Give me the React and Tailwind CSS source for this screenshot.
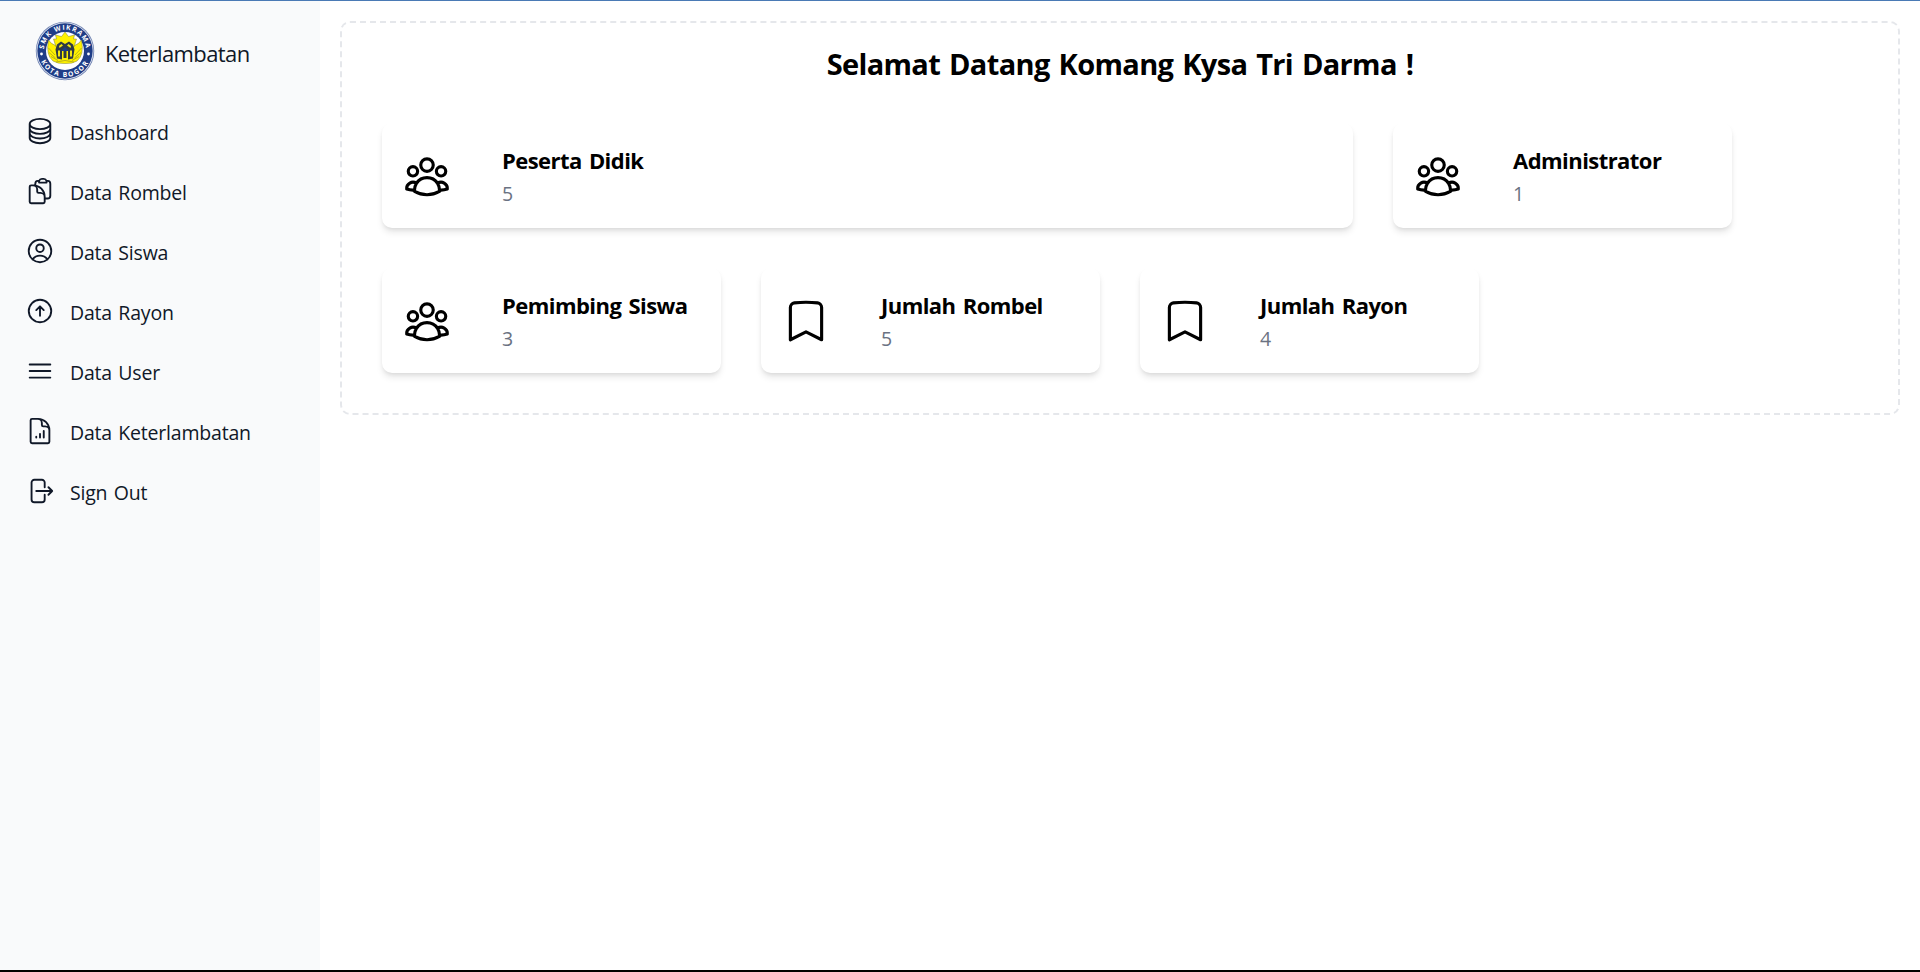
import {
  HiOutlineCircleStack,
  HiOutlineClipboardDocument,
  HiOutlineUserCircle,
  HiOutlineArrowUpCircle,
  HiOutlineBars3,
  HiOutlineDocumentChartBar,
  HiOutlineArrowRightOnRectangle,
  HiOutlineUserGroup,
  HiOutlineBookmark,
} from "react-icons/hi2";

const menu = [
  { label: "Dashboard", Icon: HiOutlineCircleStack },
  { label: "Data Rombel", Icon: HiOutlineClipboardDocument },
  { label: "Data Siswa", Icon: HiOutlineUserCircle },
  { label: "Data Rayon", Icon: HiOutlineArrowUpCircle },
  { label: "Data User", Icon: HiOutlineBars3 },
  { label: "Data Keterlambatan", Icon: HiOutlineDocumentChartBar },
  { label: "Sign Out", Icon: HiOutlineArrowRightOnRectangle },
];

const stats = [
  { title: "Peserta Didik", value: 5, Icon: HiOutlineUserGroup, size: "w-[971px]" },
  { title: "Administrator", value: 1, Icon: HiOutlineUserGroup, size: "w-[339px]" },
  { title: "Pemimbing Siswa", value: 3, Icon: HiOutlineUserGroup, size: "w-[339px]" },
  { title: "Jumlah Rombel", value: 5, Icon: HiOutlineBookmark, size: "w-[339px]" },
  { title: "Jumlah Rayon", value: 4, Icon: HiOutlineBookmark, size: "w-[339px]" },
];

function Logo() {
  return (
    <svg viewBox="0 0 120 120" className="h-[60px] w-[60px] shrink-0">
      <defs>
        <path id="ring-top" d="M 17.6 63 A 42.5 42.5 0 1 1 102.4 63" />
        <path id="ring-bottom" d="M 8 60 A 52 52 0 0 0 112 60" />
      </defs>
      <circle cx="60" cy="60" r="58.5" fill="#7486b5" />
      <circle cx="60" cy="60" r="56.8" fill="#e8ecf4" />
      <circle cx="60" cy="60" r="55.3" fill="#1f3d87" />
      <circle cx="60" cy="60" r="38" fill="#ffffff" />
      <g fill="#ffffff" fontFamily="'Open Sans', sans-serif" fontWeight="700" fontSize="13.5">
        <text textAnchor="middle" letterSpacing="2.4">
          <textPath href="#ring-top" startOffset="50%">SMK WIKRAMA</textPath>
        </text>
        <text textAnchor="middle" letterSpacing="3">
          <textPath href="#ring-bottom" startOffset="50%">KOTA BOGOR</textPath>
        </text>
      </g>
      <circle cx="13" cy="66" r="2.8" fill="#fff" />
      <circle cx="107" cy="66" r="2.8" fill="#fff" />
      <path
        d="M27 38 Q32 46 41 49 L45 53 L75 53 L79 49 Q88 46 93 38 Q99 68 84 80 Q74 86 60 85 Q46 86 36 80 Q21 68 27 38 Z"
        fill="#fff200"
        stroke="#777d3c"
        strokeWidth="1"
      />
      <path
        d="M60 22 L67 31 L79 28 L77 36 L83 36 L78 52 L42 52 L37 36 L43 36 L41 28 L53 31 Z"
        fill="#fff200"
        stroke="#777d3c"
        strokeWidth="1"
      />
      <path d="M27 54 L40 68 M28 63 L41 74 M32 71 L46 79 M93 54 L80 68 M92 63 L79 74 M88 71 L74 79 M42 82 Q60 76 78 82" stroke="#a39c22" strokeWidth="1.5" fill="none" />
      <path d="M44 47 L52 41 L60 46 L68 41 L76 47 L79 57 L76 75 L66 77 L66 60 L63 60 L63 74 L57 74 L57 60 L54 60 L54 77 L44 75 L41 57 Z" fill="#303b45" />
      <path d="M46 59 H50 V71 H46 Z M70 59 H74 V71 H70 Z M48 50 L53 46 L56 49 L49 54 Z M72 50 L67 46 L64 49 L71 54 Z" fill="#f3e812" />
      <path d="M52 60 L60 52 L68 60 Z" fill="#1f3d87" />
    </svg>
  );
}

function StatCard({ title, value, Icon, size }) {
  return (
    <div
      className={`${size} flex h-[105px] items-center gap-[50px] rounded-[10px] bg-white px-5 shadow-[0_5px_7.5px_-1.25px_rgba(0,0,0,0.1),0_2.5px_5px_-2.5px_rgba(0,0,0,0.1)]`}
    >
      <Icon className="h-[50px] w-[50px] shrink-0 text-black" />
      <div>
        <h5 className="text-[22px] leading-[35px] font-bold tracking-[-0.55px] [word-spacing:2px] text-black">{title}</h5>
        <p className="pt-px text-[19.5px] leading-[29px] tracking-[-0.5px] text-gray-500">{value}</p>
      </div>
    </div>
  );
}

export default function App() {
  return (
    <div className="flex h-[972px] flex-col border-t border-b-2 border-t-[#4a7ab5] border-b-black bg-white font-['Open_Sans','Noto_Sans',sans-serif]">
      <div className="flex min-h-0 flex-1">
        <aside className="w-80 shrink-0 bg-gray-50 px-[15px] pt-5">
          <div className="flex items-center gap-[10px] pl-5">
            <Logo />
            <span className="pt-1 text-[22px] leading-[35px] tracking-[-0.6px] text-gray-900">Keterlambatan</span>
          </div>
          <ul className="mt-[25px] flex flex-col gap-[10px]">
            {menu.map(({ label, Icon }) => (
              <li key={label} className="flex h-[50px] items-center gap-[15px] px-[10px] text-gray-900">
                <Icon className="h-[30px] w-[30px] shrink-0" />
                <span className="pt-[3px] text-[19.5px] leading-[30px] font-medium tracking-[-0.2px] [word-spacing:1.5px]">
                  {label}
                </span>
              </li>
            ))}
          </ul>
        </aside>
        <main className="flex-1 p-5">
          <section className="h-[394px] rounded-[10px] border-2 border-dashed border-gray-200">
            <h1 className="pt-[21px] text-center text-[29px] leading-[40px] font-bold tracking-[-0.65px] [word-spacing:2px] text-black">
              Selamat Datang Komang Kysa Tri Darma !
            </h1>
            <div className="mt-[39px] flex flex-wrap gap-10 pl-10">
              {stats.map((s) => (
                <StatCard key={s.title} {...s} />
              ))}
            </div>
          </section>
        </main>
      </div>
    </div>
  );
}
